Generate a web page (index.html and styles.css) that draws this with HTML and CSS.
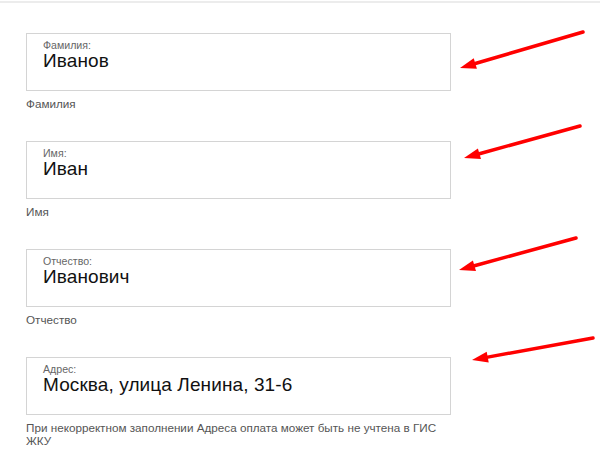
FILE: index.html
```html
<!DOCTYPE html>
<html lang="ru">
<head>
    <meta charset="UTF-8">
    <meta name="viewport" content="width=device-width, initial-scale=1.0">
    <title>Данные плательщика</title>
    <link rel="stylesheet" href="styles.css">
</head>
<body>
    <div class="topline"></div>

    <div class="form">
        <div class="field">
            <div class="box">
                <div class="label">Фамилия:</div>
                <div class="value">Иванов</div>
            </div>
            <div class="hint">Фамилия</div>
        </div>

        <div class="field">
            <div class="box">
                <div class="label">Имя:</div>
                <div class="value">Иван</div>
            </div>
            <div class="hint">Имя</div>
        </div>

        <div class="field">
            <div class="box">
                <div class="label">Отчество:</div>
                <div class="value">Иванович</div>
            </div>
            <div class="hint">Отчество</div>
        </div>

        <div class="field">
            <div class="box">
                <div class="label">Адрес:</div>
                <div class="value">Москва, улица Ленина, 31-6</div>
            </div>
            <div class="hint">При некорректном заполнении Адреса оплата может быть не учтена в ГИС ЖКУ</div>
        </div>
    </div>

    <!-- красные стрелки поверх скриншота -->
    <svg class="arrows" width="600" height="460" viewBox="0 0 600 460">
        <g stroke="#ff0000" stroke-width="3.5" stroke-linecap="round" fill="none">
            <line x1="583" y1="32" x2="475.3" y2="63.5"/>
            <line x1="580" y1="126" x2="479.4" y2="153.7"/>
            <line x1="576" y1="238" x2="474.4" y2="265.8"/>
            <line x1="593" y1="338" x2="487.7" y2="357.1"/>
        </g>
        <g fill="#ff0000">
            <polygon points="460,68 476.9,68.8 473.7,58.2"/>
            <polygon points="464,158 481,159 477.9,148.4"/>
            <polygon points="459,270 476,271.1 472.9,260.5"/>
            <polygon points="472,360 488.7,362.5 486.7,351.7"/>
        </g>
    </svg>
</body>
</html>
```

FILE: styles.css
```css
body {
    margin: 0;
    font-family: "Liberation Sans", Arial, sans-serif;
    background: #fff;
    position: relative;
    width: 600px;
    height: 460px;
    overflow: hidden;
}
.topline {
    height: 2px;
    margin-top: 1px;
    background-color: #ececec;
}
.form {
    padding: 30px 0 0 26px;
    width: 425px;
}
.field {
    margin-bottom: 31.67px;
}
.box {
    height: 58px;
    box-sizing: border-box;
    border: 1px solid #d4d4d4;
    padding: 6px 16px 0 16px;
}
.label {
    font-size: 10.6px;
    line-height: 11px;
    color: #666;
}
.value {
    font-size: 19px;
    line-height: 20px;
    letter-spacing: 0.1px;
    color: #111;
}
.hint {
    margin-top: 5.5px;
    font-size: 11.7px;
    line-height: 13px;
    color: #555;
}
.arrows {
    position: absolute;
    left: 0;
    top: 0;
}
```
